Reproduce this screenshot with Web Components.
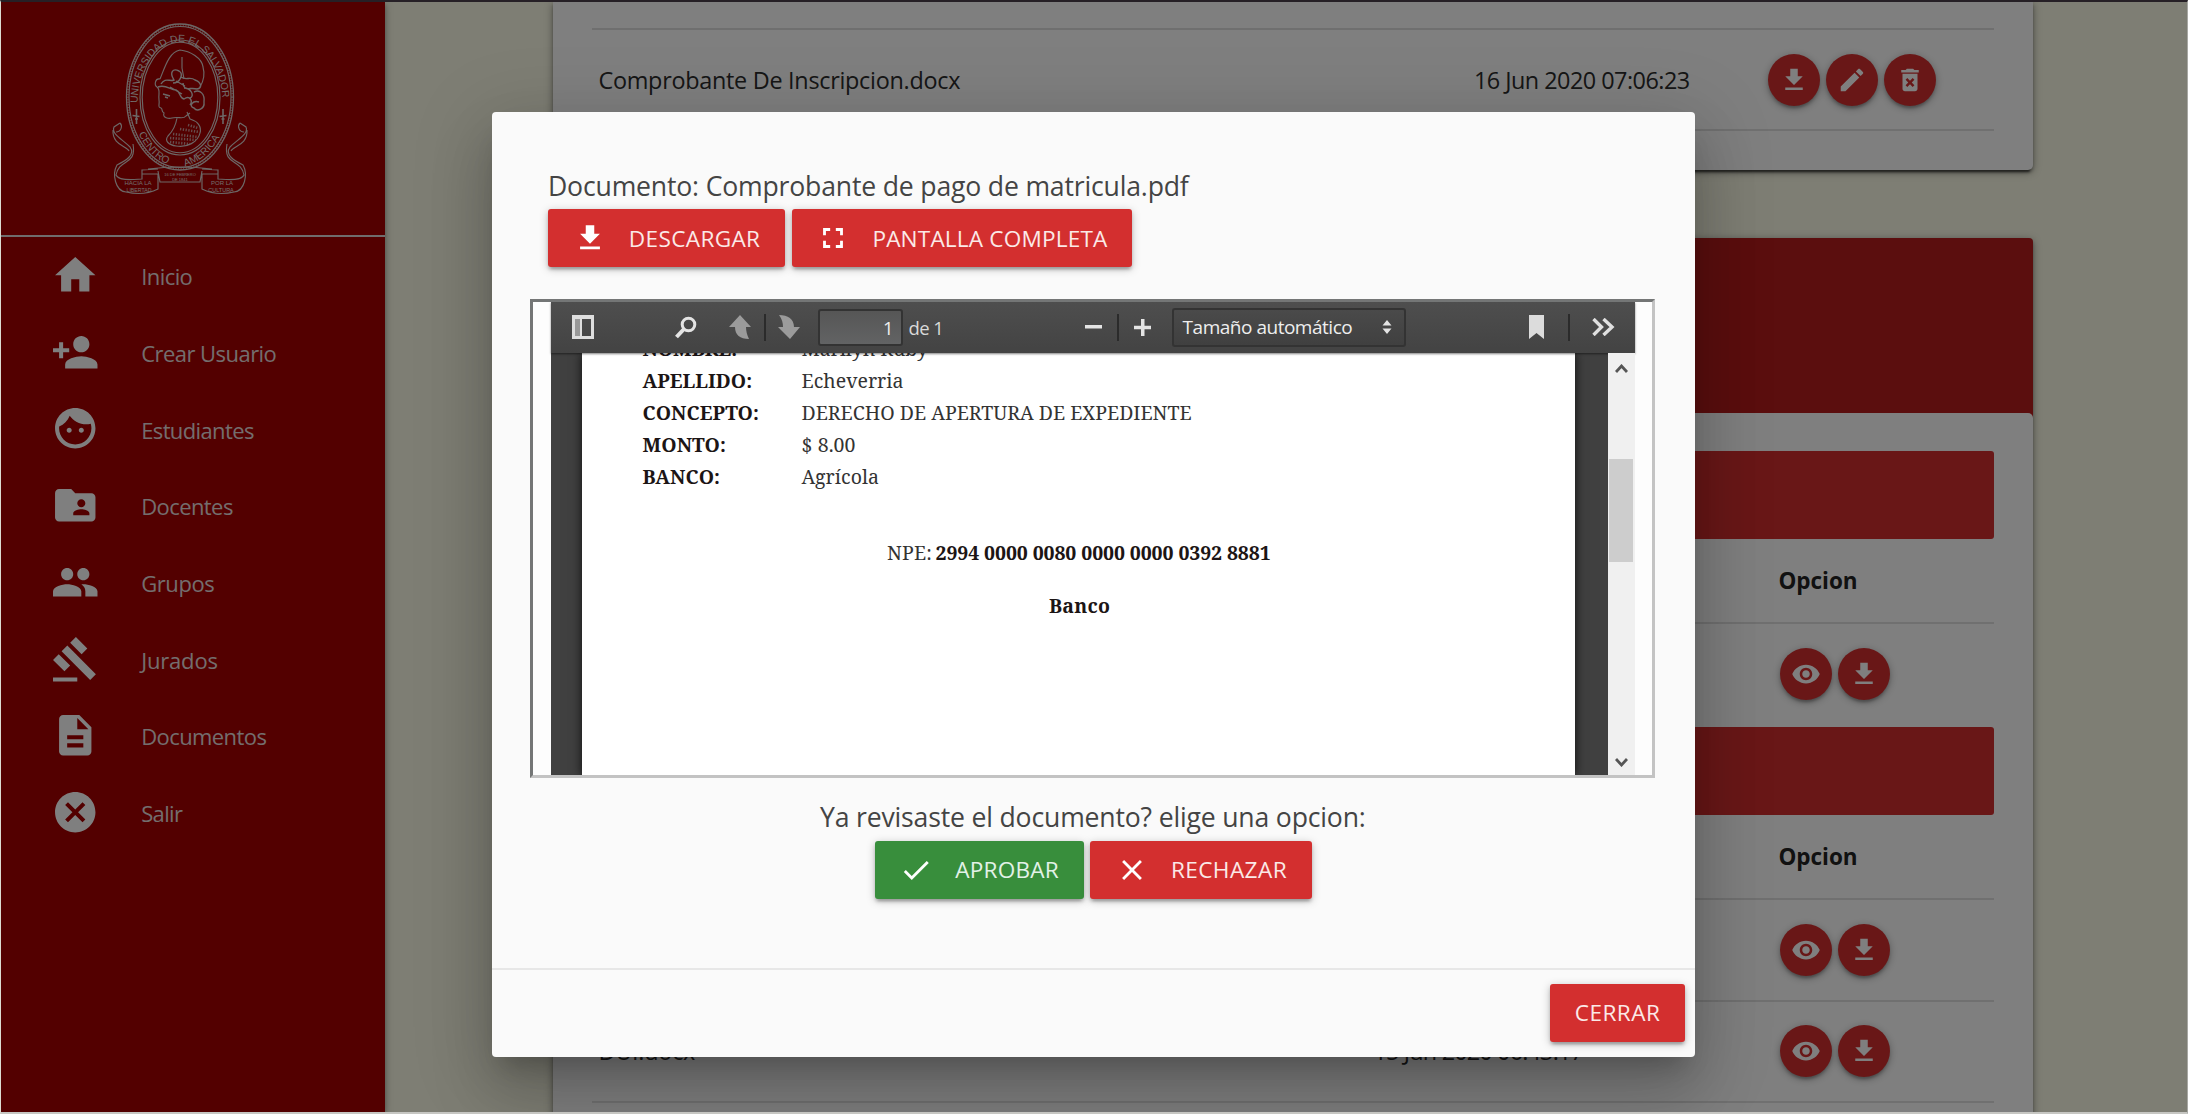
<!DOCTYPE html>
<html lang="es">
<head>
<meta charset="utf-8">
<title>Documentos</title>
<style>
html,body{margin:0;height:1114px;overflow:hidden;background:#fff}
body{font-family:"Open Sans","Noto Sans",sans-serif}
</style>
</head>
<body>
<app-shell></app-shell>
<script>
const ICONS={
home:'M10 20v-6h4v6h5v-8h3L12 3 2 12h3v8z',
person_add:'M15 12c2.21 0 4-1.79 4-4s-1.79-4-4-4-4 1.79-4 4 1.79 4 4 4zm-9-2V7H4v3H1v2h3v3h2v-3h3v-2H6zm9 4c-2.67 0-8 1.34-8 4v2h16v-2c0-2.66-5.33-4-8-4z',
face:'M9 11.75c-.69 0-1.25.56-1.25 1.25s.56 1.25 1.25 1.25 1.25-.56 1.25-1.25-.56-1.25-1.25-1.25zm6 0c-.69 0-1.25.56-1.25 1.25s.56 1.25 1.25 1.25 1.25-.56 1.25-1.25-.56-1.25-1.25-1.25zM12 2C6.48 2 2 6.48 2 12s4.48 10 10 10 10-4.48 10-10S17.52 2 12 2zm0 18c-4.41 0-8-3.59-8-8 0-.29.02-.58.05-.86 2.36-1.05 4.23-2.98 5.21-5.37C11.07 8.33 14.05 10 17.42 10c.78 0 1.53-.09 2.25-.26.21.71.33 1.47.33 2.26 0 4.41-3.59 8-8 8z',
folder:'M20 6h-8l-2-2H4c-1.1 0-1.99.9-1.99 2L2 18c0 1.1.9 2 2 2h16c1.1 0 2-.9 2-2V8c0-1.1-.9-2-2-2zm-5 3c1.1 0 2 .9 2 2s-.9 2-2 2-2-.9-2-2 .9-2 2-2zm4 8h-8v-1c0-1.33 2.67-2 4-2s4 .67 4 2v1z',
group:'M16 11c1.66 0 2.99-1.34 2.99-3S17.66 5 16 5c-1.66 0-3 1.34-3 3s1.34 3 3 3zm-8 0c1.66 0 2.99-1.34 2.99-3S9.66 5 8 5C6.34 5 5 6.34 5 8s1.34 3 3 3zm0 2c-2.33 0-7 1.17-7 3.5V19h14v-2.5c0-2.33-4.67-3.5-7-3.5zm8 0c-.29 0-.62.02-.97.05 1.16.84 1.97 1.97 1.97 3.45V19h6v-2.5c0-2.33-4.67-3.5-7-3.5z',
gavel:'M1 21h12v2H1zM5.245 8.07l2.83-2.827 14.14 14.142-2.828 2.828zM12.317 1l5.657 5.656-2.83 2.83-5.654-5.66zM3.825 9.485l5.657 5.657-2.828 2.828-5.657-5.657z',
description:'M14 2H6c-1.1 0-1.99.9-1.99 2L4 20c0 1.1.89 2 1.99 2H18c1.1 0 2-.9 2-2V8l-6-6zm2 16H8v-2h8v2zm0-4H8v-2h8v2zm-3-5V3.5L18.5 9H13z',
cancel:'M12 2C6.47 2 2 6.47 2 12s4.47 10 10 10 10-4.47 10-10S17.53 2 12 2zm5 13.59L15.59 17 12 13.41 8.41 17 7 15.59 10.59 12 7 8.41 8.41 7 12 10.59 15.59 7 17 8.41 13.41 12 17 15.59z',
download:'M19 9h-4V3H9v6H5l7 7 7-7zM5 18v2h14v-2H5z',
edit:'M3 17.25V21h3.75L17.81 9.94l-3.75-3.75L3 17.25zM20.71 7.04c.39-.39.39-1.02 0-1.41l-2.34-2.34c-.39-.39-1.02-.39-1.41 0l-1.83 1.83 3.75 3.75 1.83-1.83z',
trash:'M6 19c0 1.1.9 2 2 2h8c1.1 0 2-.9 2-2V7H6v12zm2.46-7.12l1.41-1.41L12 12.59l2.12-2.12 1.41 1.41L13.41 14l2.12 2.12-1.41 1.41L12 15.41l-2.12 2.12-1.41-1.41L10.59 14l-2.13-2.12zM15.5 4l-1-1h-5l-1 1H5v2h14V4z',
eye:'M12 4.5C7 4.5 2.73 7.61 1 12c1.73 4.39 6 7.5 11 7.5s9.27-3.11 11-7.5c-1.73-4.39-6-7.5-11-7.5zM12 17c-2.76 0-5-2.24-5-5s2.24-5 5-5 5 2.24 5 5-2.24 5-5 5zm0-8c-1.66 0-3 1.34-3 3s1.34 3 3 3 3-1.34 3-3-1.34-3-3-3z',
fullscreen:'M7 14H5v5h5v-2H7v-3zm-2-4h2V7h3V5H5v5zm12 7h-3v2h5v-5h-2v3zM14 5v2h3v3h2V5h-5z',
check:'M9 16.17L4.83 12l-1.42 1.41L9 19 21 7l-1.41-1.41z',
close:'M19 6.41L17.59 5 12 10.59 6.41 5 5 6.41 10.59 12 5 17.59 6.41 19 12 13.41 17.59 19 19 17.59 13.41 12z'
};
const define=(name,render,after)=>customElements.define(name,class extends HTMLElement{
  constructor(){super();this.attachShadow({mode:'open'});}
  connectedCallback(){this.shadowRoot.innerHTML=render(this);if(after)after(this);}
});

define('md-icon',e=>`<style>:host{display:block;flex:none;width:${e.getAttribute('size')}px;height:${e.getAttribute('size')}px}svg{display:block;width:100%;height:100%;fill:currentColor}</style>
<svg viewBox="0 0 24 24"><path d="${ICONS[e.getAttribute('name')]}"/></svg>`);

/* One line of text whose tracking is adjusted so that it spans a given width. */
define('fit-text',e=>`<style>:host{display:block;flex:none;white-space:pre;width:${e.getAttribute('w')}px}span{display:inline-block;margin-left:-1px}</style><span>${e.getAttribute('text')}</span>`,
e=>{const s=e.shadowRoot.querySelector('span');const w=+e.getAttribute('w')+1.6;
  s.style.letterSpacing=((w-s.getBoundingClientRect().width)/e.getAttribute('text').length)+'px';});

define('nav-item',e=>`<style>:host{display:flex;align-items:center;height:76.7px;padding-left:50.2px;color:#fff}fit-text{margin-left:42.5px;padding-top:2px;font-size:22px;color:#e6dcdc}</style>
<md-icon name="${e.getAttribute('icon')}" size="48.5"></md-icon><fit-text w="${e.getAttribute('w')}" text="${e.getAttribute('label')}"></fit-text>`);

define('uni-seal',()=>`<style>:host{display:block;width:140px;height:180px}svg{display:block}text{font-family:"Liberation Sans",sans-serif;fill:#e2dcda}</style>
<svg width="140" height="180" viewBox="110 18 140 180" fill="none" stroke="#d9cfcd" stroke-width="1.15">
<ellipse cx="180" cy="97" rx="53.5" ry="73" stroke-width="1.3"/><ellipse cx="180" cy="97" rx="51" ry="70.5"/><ellipse cx="180" cy="97" rx="52.2" ry="71.8" stroke-width="2" stroke-dasharray="1 1.6" opacity=".65"/>
<ellipse cx="180" cy="97.5" rx="40" ry="57.5"/><ellipse cx="180" cy="97.5" rx="37.8" ry="55.2"/>
<path id="top" d="M137.500 103 A42.500 61 0 0 1 222.500 103" stroke="none"/>
<path id="bl" d="M138.500 133.500 Q151 160 173 166" stroke="none"/><path id="br" d="M185 166.500 Q208 160 222.500 132" stroke="none"/>
<g stroke="none" font-size="10.200"><text><textPath href="#top">UNIVERSIDAD DE EL SALVADOR</textPath></text>
<text><textPath href="#bl">CENTRO</textPath></text><text><textPath href="#br">AMERICA</textPath></text></g>
<path stroke-width="1.6" d="M136.500 109v15M132.500 115.500l7 1M135 119h3M223 109v15M219.500 116.500l7-1M221.500 119h3"/>
<!-- profile -->
<path d="M160 79C165 67 169 52 180 50C190 51 202 58 203 67C205 74 203 82 200 87M182 57V68L184 79M160 79C155 78 154 85 157 87C161 90 158 94 159 100C160 105 157 107 161 108C163 109 161 112 164 113C162 118 169 119 172 118C178 116 183 120 186 116L190 113M177 118C176 124 174 130 168 136C164 141 169 145 176 146C187 148 198 142 200 133C202 126 197 121 190 119L187 112"/>
<path stroke-width="1.4" d="M161 84C165 77 170 82 174 80C169 72 173 68 179 71C184 74 180 83 173 83M181 77C186 81 190 76 195 80C201 82 203 88 197 89C190 87 184 92 183 83M158 87C166 84 170 90 176 90C181 92 179 98 184 99C190 95 193 101 190 105M184 88C191 88 195 96 190 98M194 92C200 89 205 94 204 102C205 109 197 112 194 108C188 106 193 100 199 102M163 94L170 96M165 97L168 98M176 81L185 86M170 87L182 94"/>
<path stroke-width="2.6" stroke-dasharray="1.3 1.5" opacity=".75" d="M188 125L198 128M180 129L199 132M173 134L198 137M170 138L196 140M170 142L190 144"/>
<!-- ribbon -->
<path d="M120 123L114 127C111 134 122 139 130 147C136 155 125 161 117 165C112 174 115 191 126 192C139 195 150 193 158 189V174H142V170L158 169M120 123C123 126 121 132 116 132M113 130C112 145 127 146 129 151M133 144C137 166 119 158 116 175C119 182 137 179 142 179V172M158 171L160 182H200L202 171M148 169Q180 165 212 169M240 123L246 127C249 134 238 139 230 147C224 155 235 161 243 165C248 174 245 191 234 192C221 195 210 193 202 189V174H218V170L202 169M240 123C237 126 239 132 244 132M247 130C248 145 233 146 231 151M227 144C223 166 241 158 244 175C241 182 223 179 218 179V172"/>
<g stroke="none" font-size="6" text-anchor="middle"><text x="138" y="185">HACIA LA</text><text x="139" y="191.500" font-size="5.200">LIBERTAD</text><text x="222" y="185">POR LA</text><text x="221" y="191.500" font-size="5.500">CULTURA</text><text x="180" y="176" font-size="4">16 DE FEBRERO</text><text x="180" y="180.500" font-size="4">DE 1841</text></g>
</svg>`);

define('side-bar',()=>`<style>:host{display:flex;flex-direction:column;flex:none;width:384px;background:#a60000;box-shadow:0 3px 4px rgba(0,0,0,.2),0 2px 8px rgba(0,0,0,.3);z-index:1}
header{border-bottom:2px solid #e0dada;display:flex;justify-content:center;padding:16px 26px 0 0;box-sizing:border-box;height:235px}</style>
<header><uni-seal></uni-seal></header>
<nav>${[['home','Inicio',49.5],['person_add','Crear Usuario',133.5],['face','Estudiantes',111],['folder','Docentes',90],['group','Grupos',71.5],['gavel','Jurados',75],['description','Documentos',123.5],['cancel','Salir',39.5]].map(i=>`<nav-item icon="${i[0]}" label="${i[1]}" w="${i[2]}"></nav-item>`).join('')}</nav>`);

define('round-btn',e=>`<style>:host{display:flex;align-items:center;justify-content:center;width:52px;height:52px;flex:none;border-radius:50%;background:#d32f2f;color:#fff;box-shadow:0 3px 3px rgba(0,0,0,.14),0 5px 2px -3px rgba(0,0,0,.12),0 2px 8px rgba(0,0,0,.3)}</style><md-icon name="${e.getAttribute('icon')}" size="30"></md-icon>`);

define('doc-row',e=>`<style>:host{display:grid;grid-template-columns:var(--cols);align-items:center;box-sizing:border-box;height:${e.getAttribute('h')}px;border-bottom:2px solid #e0e0e0;padding-left:8px;font-size:23.400px;color:#2c2c2c}
.ops{display:flex;gap:6.200px}.th{font-size:22.500px;font-weight:700;padding-top:1px;color:#222}</style>
<fit-text w="${e.getAttribute('nw')||0}" text="${e.getAttribute('name')||''}"></fit-text>
<fit-text w="${e.getAttribute('dw')||0}" text="${e.getAttribute('date')||''}"></fit-text>
${e.hasAttribute('head')?'<fit-text class="th" w="77.5" text="Opcion"></fit-text>':`<div class="ops">${e.getAttribute('ops').split(' ').map(o=>`<round-btn icon="${o}"></round-btn>`).join('')}</div>`}`);

define('main-area',()=>`<style>:host{display:flex;flex-direction:column;flex:1;padding-left:167.5px;gap:68.5px;background:#fcfce8}
section{width:1480.500px;flex:none;box-sizing:border-box;border-radius:4px;background:#fff;box-shadow:0 3px 3px rgba(0,0,0,.24),0 5px 2px -3px rgba(0,0,0,.5),0 2px 8px rgba(0,0,0,.4)}
.one{height:167.500px;padding:26px 39px 0;--cols:875.5px 292.5px 1fr;border-radius:0 0 5px 5px}.one>hr{border:0;margin:0;height:2px;background:#dedede}
.two{background:#b71c1c}.top{height:174.500px}.body{background:#fff;border-radius:5px;padding:38.500px 39px 20px;--cols:775px 405px 1fr}
.bar{height:87.800px;border-radius:3px;background:#d32f2f}</style>
<section class="one"><hr><doc-row h="101" nw="360" name="Comprobante De Inscripcion.docx" dw="214" date="16 Jun 2020 07:06:23" ops="download edit trash"></doc-row></section>
<section class="two"><div class="top"></div><div class="body">
<div class="bar"></div><doc-row head h="85"></doc-row><doc-row h="103" style="border-color:transparent" ops="eye download"></doc-row>
<div class="bar"></div><doc-row head h="85"></doc-row><doc-row h="102" ops="eye download"></doc-row><doc-row h="101.5" nw="95" name="DUI.docx" dw="208" date="15 Jun 2020 06:43:17" ops="eye download"></doc-row><doc-row h="102" ops="eye download"></doc-row>
</div></section>`);

define('flat-btn',e=>`<style>:host{display:flex;align-items:center;box-sizing:border-box;flex:none;height:58px;padding:0 25.300px;gap:22.500px;border-radius:3px;background:#d32f2f;color:#fff;box-shadow:0 3px 3px rgba(0,0,0,.14),0 5px 2px -3px rgba(0,0,0,.12),0 2px 8px rgba(0,0,0,.25)}
:host([green]){background:#388e3c}fit-text{font-size:22.600px;color:#fbe9e7}:host([green]) fit-text{color:#e3f2e8}md-icon{margin-left:-.6px;margin-right:.6px}</style>
${e.hasAttribute('icon')?`<md-icon name="${e.getAttribute('icon')}" size="34"></md-icon>`:''}<fit-text w="${e.getAttribute('w')}" text="${e.getAttribute('label')}"></fit-text>`);

define('pdf-toolbar',()=>`<style>:host{display:flex;align-items:center;height:51px;box-sizing:border-box;padding:0 20px;background:linear-gradient(#4e4e4e,#434343);color:#d9d9d9;font-size:18.500px;box-shadow:0 1px 2px rgba(0,0,0,.5)}
svg{display:block;flex:none}i{width:2px;height:27px;background:#2b2b2b;flex:none}
.num{box-sizing:border-box;width:85px;height:37px;border:2px solid #333;border-radius:3px;background:linear-gradient(#565656,#626364);display:flex;align-items:center;justify-content:flex-end;padding-right:7px;color:#eee}
.sel{box-sizing:border-box;width:235px;height:39px;border:2px solid #333;border-radius:3px;background:linear-gradient(#4a4a4a,#404040);display:flex;align-items:center;justify-content:space-between;padding:0 12px 0 10px;color:#eee;font-size:19px}</style>
<svg width="24" height="24" viewBox="0 0 24 24"><path fill="#dedede" fill-rule="evenodd" d="M1 0h22v24H1zM4 4v17h16V4z"/><path fill="#999" d="M4 4h5v17H4z"/><path fill="#dedede" d="M9 4h2v17H9z"/></svg>
<svg style="margin-left:80px" width="23" height="23" viewBox="0 0 23 23" fill="none" stroke="#e4e4e4"><circle cx="13.500" cy="8.500" r="6.300" stroke-width="3"/><path stroke-width="4" d="M9 13l-7.500 8"/></svg>
<svg style="margin-left:31px" width="23" height="24" viewBox="0 0 23 24"><path fill="#9b9b9b" d="M11 0l11 12h-5c0 4 1 8 3 12-9 0-14-4-14-12H0z"/></svg>
<i style="margin-left:12px"></i>
<svg style="margin-left:12px" width="23" height="24" viewBox="0 0 23 24"><path fill="#9b9b9b" d="M12 24L0 12h5c0-4-1-8-4-12 9 0 15 4 15 12h6z"/></svg>
<div class="num" style="margin-left:17px">1</div><fit-text style="margin-left:7px" w="33" text="de 1"></fit-text>
<svg style="margin-left:142px" width="17" height="4"><path fill="#e4e4e4" d="M0 0h17v3.500H0z"/></svg><i style="margin-left:15px"></i>
<svg style="margin-left:15.500px" width="17" height="17"><path fill="#e4e4e4" d="M7 0h3.500v6.700H17v3.500h-6.500V17H7v-6.800H0V6.700h7z"/></svg>
<div class="sel" style="margin-left:20.500px"><fit-text w="168" text="Tamaño automático"></fit-text><svg width="10" height="14"><path fill="#e4e4e4" d="M5 0l4.500 5.500H.5zM5 14L.5 8.500h9z"/></svg></div>
<svg style="margin-left:123px" width="15" height="24"><path fill="#dcdcdc" d="M0 0h15v24l-7.500-6L0 24z"/></svg><i style="margin-left:24px"></i>
<svg style="margin-left:22px" width="23" height="18" fill="none" stroke="#e0e0e0" stroke-width="3.400"><path d="M1.500 1l8 8-8 8M11.500 1l8.500 8-8.500 8"/></svg>`);

define('pdf-page',()=>`<style>:host{display:flex;flex-direction:column;width:993px;height:423px;flex:none;background:#fff;color:#333;font:19.500px/31.800px "Noto Serif","Droid Serif","DejaVu Serif Condensed","DejaVu Serif",serif;box-shadow:0 0 10px rgba(0,0,0,.8)}
.tab{display:grid;grid-template-columns:159px 1fr;padding:0 0 0 61.500px;margin-top:-19.500px}.tab>:nth-child(odd),.b{font-weight:700;color:#1c1515}
.npe{display:flex;gap:5px;margin:44.800px 0 0 306px}.ban{margin:20.500px 0 0 468px}</style>
<div class="tab">${[['NOMBRE:',93,'Marilyn Ruby',124.5],['APELLIDO:',108,'Echeverria',100.5],['CONCEPTO:',115,'DERECHO DE APERTURA DE EXPEDIENTE',388.5],['MONTO:',82,'$ 8.00',52.5],['BANCO:',76,'Agrícola',76]].map(r=>`<fit-text w="${r[1]}" text="${r[0]}"></fit-text><fit-text w="${r[3]}" text="${r[2]}"></fit-text>`).join('')}</div>
<div class="npe"><fit-text w="43.5" text="NPE:"></fit-text><fit-text class="b" w="333.5" text="2994 0000 0080 0000 0000 0392 8881"></fit-text></div>
<fit-text class="b ban" w="59.5" text="Banco"></fit-text>`);

define('pdf-viewer',()=>`<style>:host{display:flex;flex-direction:column;box-sizing:border-box;width:1125px;height:479.500px;border:3px solid;border-color:#747676 #c3c3c3 #c3c3c3 #747676;padding:0 17.500px 0 18px;background:#fdfdfd;overflow:hidden}
pdf-toolbar{position:relative;z-index:1}.view{display:flex;flex:1;min-height:0;background:#404040;padding-left:31px;overflow:hidden}
.scroll{margin-left:auto;width:27px;background:#f0f0f0;display:flex;flex-direction:column;justify-content:space-between;align-items:center;padding:11px 0 8px;box-sizing:border-box;z-index:1}
.thumb{width:24px;height:103px;background:#cdcdcd;margin:86.500px 0 auto}svg{display:block}</style>
<pdf-toolbar></pdf-toolbar><div class="view"><pdf-page></pdf-page><div class="scroll">
<svg width="13" height="9" fill="none" stroke="#555" stroke-width="2.800"><path d="M1 8l5.500-6L12 8"/></svg><div class="thumb"></div><svg width="13" height="9" fill="none" stroke="#555" stroke-width="2.800"><path d="M1 1l5.500 6L12 1"/></svg></div></div>`);

define('modal-dialog',()=>`<style>:host{display:flex;flex-direction:column;width:1202.500px;height:944.500px;flex:none;border-radius:4px;background:#fafafa;color:#444;box-shadow:0 38px 61px 5px rgba(0,0,0,.14),0 14px 74px 13px rgba(0,0,0,.12),0 18px 24px -11px rgba(0,0,0,.2)}
.content{height:855.500px;box-sizing:border-box;padding:56px 0 0 38px;display:flex;flex-direction:column}.btns{display:flex;gap:6.500px;margin-left:18px}
.title{font-size:26.600px;line-height:36px;margin:0 0 5.300px 19px}.q{font-size:26.600px;line-height:36px;margin:20.500px 0 6px 291px}
footer{border-top:2px solid #e7e7e7;flex:1;display:flex;justify-content:flex-end;padding:14px 9.500px 0 0}</style>
<div class="content"><fit-text class="title" w="639" text="Documento: Comprobante de pago de matricula.pdf"></fit-text>
<div class="btns"><flat-btn icon="download" label="DESCARGAR" w="130"></flat-btn><flat-btn icon="fullscreen" label="PANTALLA COMPLETA" w="233.5"></flat-btn></div>
<pdf-viewer style="margin-top:31.700px"></pdf-viewer>
<fit-text class="q" w="544" text="Ya revisaste el documento? elige una opcion:"></fit-text>
<div class="btns" style="margin-left:344.500px"><flat-btn green icon="check" label="APROBAR" w="102"></flat-btn><flat-btn icon="close" label="RECHAZAR" w="114.5"></flat-btn></div></div>
<footer><flat-btn label="CERRAR" w="84"></flat-btn></footer>`);

define('app-shell',()=>`<style>:host{display:flex;position:relative;box-sizing:border-box;width:2188px;height:1114px;overflow:hidden;border:solid;border-width:2px 1px 2px 1px;border-color:#262026 #a8a8a4 #c6c6c2 #dcdcd2}
.overlay{position:absolute;inset:0;background:rgba(0,0,0,.5);z-index:5;padding:110px 0 0 491px;display:flex;align-items:flex-start}</style>
<side-bar></side-bar><main-area></main-area><div class="overlay"><modal-dialog></modal-dialog></div>`);
</script>
</body>
</html>
